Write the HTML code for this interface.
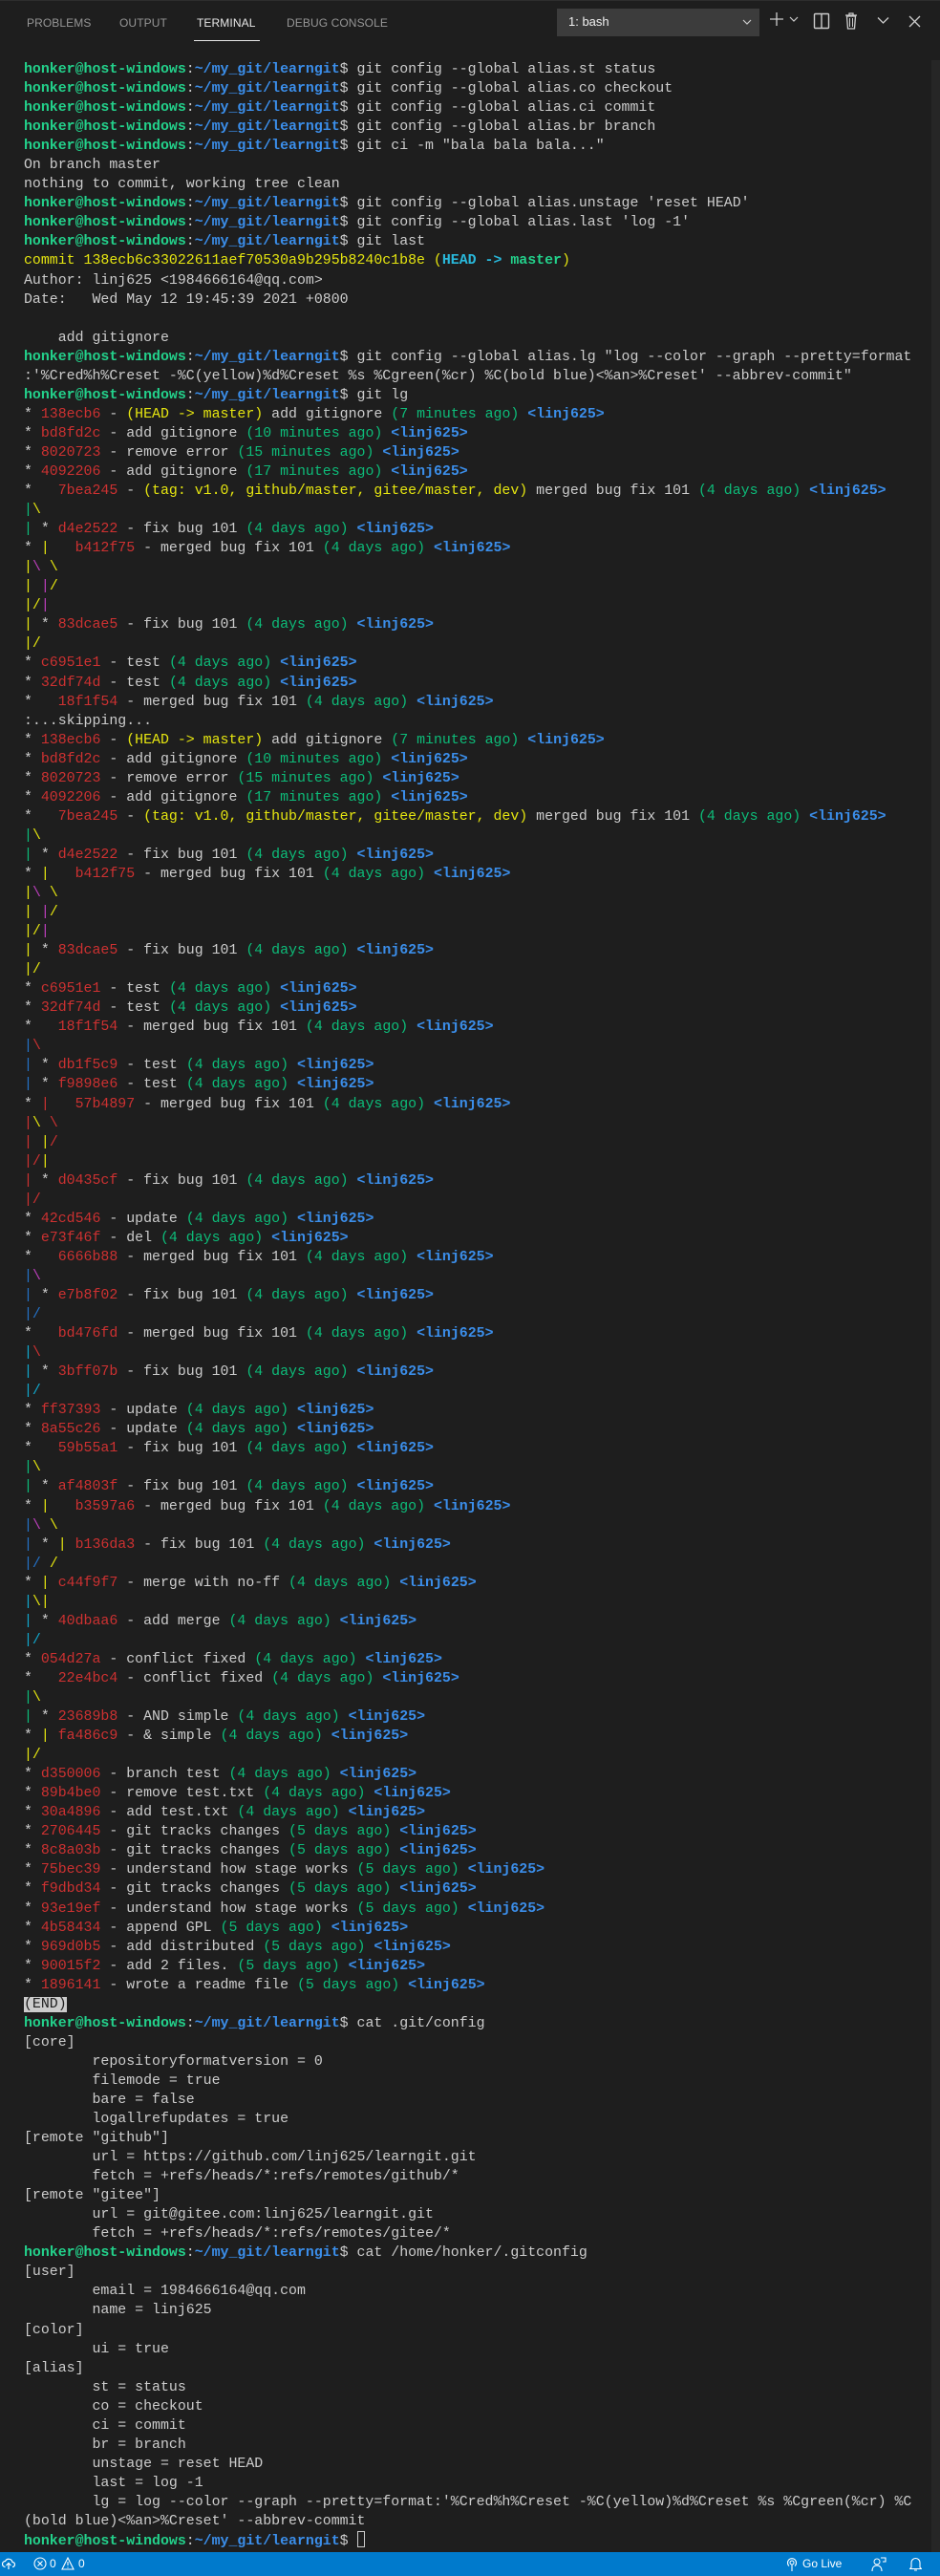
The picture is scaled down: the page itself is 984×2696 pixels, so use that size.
<!DOCTYPE html>
<html><head><meta charset="utf-8">
<style>
*{margin:0;padding:0;box-sizing:border-box}
html,body{width:984px;height:2696px;background:#1e1e1e;overflow:hidden;position:relative}
.tabs{position:absolute;left:0;top:0;width:984px;height:46px;font-family:"Liberation Sans",sans-serif;font-size:12px;color:#969696;border-top:1px solid #2d2d2d}
.tab{position:absolute;top:16px;letter-spacing:0.1px}
.tab.act{color:#e7e7e7}
.uline{position:absolute;left:203px;top:41px;width:69px;height:1px;background:#e7e7e7}
.dd{position:absolute;left:583px;top:8px;width:212px;height:29px;background:#3c3c3c;color:#f0f0f0;font-size:13px;padding:6px 0 0 12px}
.dd svg{position:absolute;right:8px;top:10px}
.ic{position:absolute;top:10px}
pre{position:absolute;left:25px;top:63px;font-family:"Liberation Mono",monospace;font-size:14.9px;line-height:20.05px;color:#cccccc;white-space:pre}
.g{color:#23d18b;font-weight:bold}.b{color:#3b8eea;font-weight:bold}
.r{color:#cd3131}.y{color:#e5e510}.t{color:#0dbc79}.a{color:#3b8eea;font-weight:bold}
.hc{color:#29b8db;font-weight:bold}.hm{color:#23d18b;font-weight:bold}
.R{color:#cd3131}.Y{color:#e5e510}.G{color:#0dbc79}.B{color:#2472c8}.M{color:#bc3fbc}.C{color:#11a8cd}
.end{background:#cccccc;color:#1e1e1e}
.cur{display:inline-block;width:8px;height:17px;border:1px solid #cccccc;vertical-align:-3px}
.sb{position:absolute;right:0;top:63px;width:9px;height:2608px;background:#262626}
.status{position:absolute;left:0;top:2671px;width:984px;height:25px;background:#007acc;color:#fff;font-family:"Liberation Sans",sans-serif;font-size:12px}
.status span{position:absolute;top:5px}
</style></head><body>
<div class="tabs">
<div class="tab" style="left:28px">PROBLEMS</div>
<div class="tab" style="left:125px">OUTPUT</div>
<div class="tab act" style="left:206px">TERMINAL</div>
<div class="tab" style="left:300px">DEBUG CONSOLE</div>
<div class="uline"></div>
<div class="dd">1: bash<svg width="10" height="8" viewBox="0 0 10 8"><path d="M1 2l4 4 4-4" stroke="#ccc" fill="none" stroke-width="1.2"/></svg></div>
<svg class="ic" style="left:804px" width="18" height="18" viewBox="0 0 18 18"><path d="M9 2v14M2 9h14" stroke="#ccc" stroke-width="1.3"/></svg>
<svg class="ic" style="left:826px;top:15px" width="10" height="8" viewBox="0 0 10 8"><path d="M1 2l4 4 4-4" stroke="#ccc" fill="none" stroke-width="1.2"/></svg>
<svg class="ic" style="left:851px;top:12px" width="18" height="18" viewBox="0 0 18 18"><rect x="1.5" y="1.5" width="15" height="15" rx="1" stroke="#ccc" fill="none" stroke-width="1.4"/><path d="M9 1.5v15" stroke="#ccc" stroke-width="1.4"/></svg>
<svg class="ic" style="left:884px;top:12px" width="14" height="18" viewBox="0 0 14 18"><path d="M1 3h12M5 3V1h4v2M2.5 4h9l-1 13h-7z" stroke="#ccc" fill="none" stroke-width="1.3"/><path d="M5.5 6v9M8.5 6v9" stroke="#ccc" stroke-width="1"/></svg>
<svg class="ic" style="left:918px;top:16px" width="13" height="9" viewBox="0 0 13 9"><path d="M1 1.5l5.5 5.5 5.5-5.5" stroke="#ccc" fill="none" stroke-width="1.3"/></svg>
<svg class="ic" style="left:951px;top:15px" width="13" height="13" viewBox="0 0 13 13"><path d="M1 1l11 11M12 1L1 12" stroke="#ccc" stroke-width="1.3"/></svg>
</div>
<div class="sb"></div>
<pre><span class="g">honker@host-windows</span>:<span class="b">~/my_git/learngit</span>$ git config --global alias.st status
<span class="g">honker@host-windows</span>:<span class="b">~/my_git/learngit</span>$ git config --global alias.co checkout
<span class="g">honker@host-windows</span>:<span class="b">~/my_git/learngit</span>$ git config --global alias.ci commit
<span class="g">honker@host-windows</span>:<span class="b">~/my_git/learngit</span>$ git config --global alias.br branch
<span class="g">honker@host-windows</span>:<span class="b">~/my_git/learngit</span>$ git ci -m "bala bala bala..."
On branch master
nothing to commit, working tree clean
<span class="g">honker@host-windows</span>:<span class="b">~/my_git/learngit</span>$ git config --global alias.unstage 'reset HEAD'
<span class="g">honker@host-windows</span>:<span class="b">~/my_git/learngit</span>$ git config --global alias.last 'log -1'
<span class="g">honker@host-windows</span>:<span class="b">~/my_git/learngit</span>$ git last
<span class="y">commit 138ecb6c33022611aef70530a9b295b8240c1b8e (<span class="hc">HEAD -&gt; </span><span class="hm">master</span>)</span>
Author: linj625 &lt;1984666164@qq.com&gt;
Date:   Wed May 12 19:45:39 2021 +0800

    add gitignore
<span class="g">honker@host-windows</span>:<span class="b">~/my_git/learngit</span>$ git config --global alias.lg "log --color --graph --pretty=format
:'%Cred%h%Creset -%C(yellow)%d%Creset %s %Cgreen(%cr) %C(bold blue)&lt;%an&gt;%Creset' --abbrev-commit"
<span class="g">honker@host-windows</span>:<span class="b">~/my_git/learngit</span>$ git lg
* <span class="r">138ecb6</span> - <span class="y">(HEAD -&gt; master)</span> add gitignore <span class="t">(7 minutes ago)</span> <span class="a">&lt;linj625&gt;</span>
* <span class="r">bd8fd2c</span> - add gitignore <span class="t">(10 minutes ago)</span> <span class="a">&lt;linj625&gt;</span>
* <span class="r">8020723</span> - remove error <span class="t">(15 minutes ago)</span> <span class="a">&lt;linj625&gt;</span>
* <span class="r">4092206</span> - add gitignore <span class="t">(17 minutes ago)</span> <span class="a">&lt;linj625&gt;</span>
*   <span class="r">7bea245</span> - <span class="y">(tag: v1.0, github/master, gitee/master, dev)</span> merged bug fix 101 <span class="t">(4 days ago)</span> <span class="a">&lt;linj625&gt;</span>
<span class="G">|</span><span class="Y">\</span>
<span class="G">|</span> * <span class="r">d4e2522</span> - fix bug 101 <span class="t">(4 days ago)</span> <span class="a">&lt;linj625&gt;</span>
* <span class="Y">|</span>   <span class="r">b412f75</span> - merged bug fix 101 <span class="t">(4 days ago)</span> <span class="a">&lt;linj625&gt;</span>
<span class="Y">|</span><span class="M">\</span> <span class="Y">\</span>
<span class="Y">|</span> <span class="M">|</span><span class="Y">/</span>
<span class="Y">|/</span><span class="M">|</span>
<span class="Y">|</span> * <span class="r">83dcae5</span> - fix bug 101 <span class="t">(4 days ago)</span> <span class="a">&lt;linj625&gt;</span>
<span class="Y">|/</span>
* <span class="r">c6951e1</span> - test <span class="t">(4 days ago)</span> <span class="a">&lt;linj625&gt;</span>
* <span class="r">32df74d</span> - test <span class="t">(4 days ago)</span> <span class="a">&lt;linj625&gt;</span>
*   <span class="r">18f1f54</span> - merged bug fix 101 <span class="t">(4 days ago)</span> <span class="a">&lt;linj625&gt;</span>
:...skipping...
* <span class="r">138ecb6</span> - <span class="y">(HEAD -&gt; master)</span> add gitignore <span class="t">(7 minutes ago)</span> <span class="a">&lt;linj625&gt;</span>
* <span class="r">bd8fd2c</span> - add gitignore <span class="t">(10 minutes ago)</span> <span class="a">&lt;linj625&gt;</span>
* <span class="r">8020723</span> - remove error <span class="t">(15 minutes ago)</span> <span class="a">&lt;linj625&gt;</span>
* <span class="r">4092206</span> - add gitignore <span class="t">(17 minutes ago)</span> <span class="a">&lt;linj625&gt;</span>
*   <span class="r">7bea245</span> - <span class="y">(tag: v1.0, github/master, gitee/master, dev)</span> merged bug fix 101 <span class="t">(4 days ago)</span> <span class="a">&lt;linj625&gt;</span>
<span class="G">|</span><span class="Y">\</span>
<span class="G">|</span> * <span class="r">d4e2522</span> - fix bug 101 <span class="t">(4 days ago)</span> <span class="a">&lt;linj625&gt;</span>
* <span class="Y">|</span>   <span class="r">b412f75</span> - merged bug fix 101 <span class="t">(4 days ago)</span> <span class="a">&lt;linj625&gt;</span>
<span class="Y">|</span><span class="M">\</span> <span class="Y">\</span>
<span class="Y">|</span> <span class="M">|</span><span class="Y">/</span>
<span class="Y">|/</span><span class="M">|</span>
<span class="Y">|</span> * <span class="r">83dcae5</span> - fix bug 101 <span class="t">(4 days ago)</span> <span class="a">&lt;linj625&gt;</span>
<span class="Y">|/</span>
* <span class="r">c6951e1</span> - test <span class="t">(4 days ago)</span> <span class="a">&lt;linj625&gt;</span>
* <span class="r">32df74d</span> - test <span class="t">(4 days ago)</span> <span class="a">&lt;linj625&gt;</span>
*   <span class="r">18f1f54</span> - merged bug fix 101 <span class="t">(4 days ago)</span> <span class="a">&lt;linj625&gt;</span>
<span class="B">|</span><span class="R">\</span>
<span class="B">|</span> * <span class="r">db1f5c9</span> - test <span class="t">(4 days ago)</span> <span class="a">&lt;linj625&gt;</span>
<span class="B">|</span> * <span class="r">f9898e6</span> - test <span class="t">(4 days ago)</span> <span class="a">&lt;linj625&gt;</span>
* <span class="R">|</span>   <span class="r">57b4897</span> - merged bug fix 101 <span class="t">(4 days ago)</span> <span class="a">&lt;linj625&gt;</span>
<span class="R">|</span><span class="Y">\</span> <span class="R">\</span>
<span class="R">|</span> <span class="Y">|</span><span class="R">/</span>
<span class="R">|/</span><span class="Y">|</span>
<span class="R">|</span> * <span class="r">d0435cf</span> - fix bug 101 <span class="t">(4 days ago)</span> <span class="a">&lt;linj625&gt;</span>
<span class="R">|/</span>
* <span class="r">42cd546</span> - update <span class="t">(4 days ago)</span> <span class="a">&lt;linj625&gt;</span>
* <span class="r">e73f46f</span> - del <span class="t">(4 days ago)</span> <span class="a">&lt;linj625&gt;</span>
*   <span class="r">6666b88</span> - merged bug fix 101 <span class="t">(4 days ago)</span> <span class="a">&lt;linj625&gt;</span>
<span class="B">|</span><span class="M">\</span>
<span class="B">|</span> * <span class="r">e7b8f02</span> - fix bug 101 <span class="t">(4 days ago)</span> <span class="a">&lt;linj625&gt;</span>
<span class="B">|/</span>
*   <span class="r">bd476fd</span> - merged bug fix 101 <span class="t">(4 days ago)</span> <span class="a">&lt;linj625&gt;</span>
<span class="C">|</span><span class="R">\</span>
<span class="C">|</span> * <span class="r">3bff07b</span> - fix bug 101 <span class="t">(4 days ago)</span> <span class="a">&lt;linj625&gt;</span>
<span class="C">|/</span>
* <span class="r">ff37393</span> - update <span class="t">(4 days ago)</span> <span class="a">&lt;linj625&gt;</span>
* <span class="r">8a55c26</span> - update <span class="t">(4 days ago)</span> <span class="a">&lt;linj625&gt;</span>
*   <span class="r">59b55a1</span> - fix bug 101 <span class="t">(4 days ago)</span> <span class="a">&lt;linj625&gt;</span>
<span class="G">|</span><span class="Y">\</span>
<span class="G">|</span> * <span class="r">af4803f</span> - fix bug 101 <span class="t">(4 days ago)</span> <span class="a">&lt;linj625&gt;</span>
* <span class="Y">|</span>   <span class="r">b3597a6</span> - merged bug fix 101 <span class="t">(4 days ago)</span> <span class="a">&lt;linj625&gt;</span>
<span class="B">|</span><span class="M">\</span> <span class="Y">\</span>
<span class="B">|</span> * <span class="Y">|</span> <span class="r">b136da3</span> - fix bug 101 <span class="t">(4 days ago)</span> <span class="a">&lt;linj625&gt;</span>
<span class="B">|/</span> <span class="Y">/</span>
* <span class="Y">|</span> <span class="r">c44f9f7</span> - merge with no-ff <span class="t">(4 days ago)</span> <span class="a">&lt;linj625&gt;</span>
<span class="C">|</span><span class="Y">\|</span>
<span class="C">|</span> * <span class="r">40dbaa6</span> - add merge <span class="t">(4 days ago)</span> <span class="a">&lt;linj625&gt;</span>
<span class="C">|/</span>
* <span class="r">054d27a</span> - conflict fixed <span class="t">(4 days ago)</span> <span class="a">&lt;linj625&gt;</span>
*   <span class="r">22e4bc4</span> - conflict fixed <span class="t">(4 days ago)</span> <span class="a">&lt;linj625&gt;</span>
<span class="G">|</span><span class="Y">\</span>
<span class="G">|</span> * <span class="r">23689b8</span> - AND simple <span class="t">(4 days ago)</span> <span class="a">&lt;linj625&gt;</span>
* <span class="Y">|</span> <span class="r">fa486c9</span> - &amp; simple <span class="t">(4 days ago)</span> <span class="a">&lt;linj625&gt;</span>
<span class="Y">|/</span>
* <span class="r">d350006</span> - branch test <span class="t">(4 days ago)</span> <span class="a">&lt;linj625&gt;</span>
* <span class="r">89b4be0</span> - remove test.txt <span class="t">(4 days ago)</span> <span class="a">&lt;linj625&gt;</span>
* <span class="r">30a4896</span> - add test.txt <span class="t">(4 days ago)</span> <span class="a">&lt;linj625&gt;</span>
* <span class="r">2706445</span> - git tracks changes <span class="t">(5 days ago)</span> <span class="a">&lt;linj625&gt;</span>
* <span class="r">8c8a03b</span> - git tracks changes <span class="t">(5 days ago)</span> <span class="a">&lt;linj625&gt;</span>
* <span class="r">75bec39</span> - understand how stage works <span class="t">(5 days ago)</span> <span class="a">&lt;linj625&gt;</span>
* <span class="r">f9dbd34</span> - git tracks changes <span class="t">(5 days ago)</span> <span class="a">&lt;linj625&gt;</span>
* <span class="r">93e19ef</span> - understand how stage works <span class="t">(5 days ago)</span> <span class="a">&lt;linj625&gt;</span>
* <span class="r">4b58434</span> - append GPL <span class="t">(5 days ago)</span> <span class="a">&lt;linj625&gt;</span>
* <span class="r">969d0b5</span> - add distributed <span class="t">(5 days ago)</span> <span class="a">&lt;linj625&gt;</span>
* <span class="r">90015f2</span> - add 2 files. <span class="t">(5 days ago)</span> <span class="a">&lt;linj625&gt;</span>
* <span class="r">1896141</span> - wrote a readme file <span class="t">(5 days ago)</span> <span class="a">&lt;linj625&gt;</span>
<span class="end">(END)</span>
<span class="g">honker@host-windows</span>:<span class="b">~/my_git/learngit</span>$ cat .git/config
[core]
        repositoryformatversion = 0
        filemode = true
        bare = false
        logallrefupdates = true
[remote "github"]
        url = https://github.com/linj625/learngit.git
        fetch = +refs/heads/*:refs/remotes/github/*
[remote "gitee"]
        url = git@gitee.com:linj625/learngit.git
        fetch = +refs/heads/*:refs/remotes/gitee/*
<span class="g">honker@host-windows</span>:<span class="b">~/my_git/learngit</span>$ cat /home/honker/.gitconfig
[user]
        email = 1984666164@qq.com
        name = linj625
[color]
        ui = true
[alias]
        st = status
        co = checkout
        ci = commit
        br = branch
        unstage = reset HEAD
        last = log -1
        lg = log --color --graph --pretty=format:'%Cred%h%Creset -%C(yellow)%d%Creset %s %Cgreen(%cr) %C
(bold blue)&lt;%an&gt;%Creset' --abbrev-commit
<span class="g">honker@host-windows</span>:<span class="b">~/my_git/learngit</span>$ <span class="cur"></span></pre>
<div class="status">
<svg style="position:absolute;left:2px;top:5px" width="14" height="14" viewBox="0 0 14 14"><path d="M3.5 10.5a3 3 0 0 1 0-6 4 4 0 0 1 7.5 1 2.5 2.5 0 0 1 0 5M7 13V7M4.5 9L7 6.5 9.5 9" stroke="#fff" fill="none" stroke-width="1.2"/></svg>
<svg style="position:absolute;left:35px;top:5px" width="14" height="14" viewBox="0 0 14 14"><circle cx="7" cy="7" r="6" stroke="#fff" fill="none" stroke-width="1.1"/><path d="M4.5 4.5l5 5M9.5 4.5l-5 5" stroke="#fff" stroke-width="1.1"/></svg>
<span style="left:52px">0</span>
<svg style="position:absolute;left:64px;top:5px" width="14" height="14" viewBox="0 0 14 14"><path d="M7 1L13 13H1z" stroke="#fff" fill="none" stroke-width="1.1"/><path d="M7 5v4M7 10.5v1" stroke="#fff" stroke-width="1.1"/></svg>
<span style="left:82px">0</span>
<svg style="position:absolute;left:823px;top:5px" width="12" height="15" viewBox="0 0 12 15"><circle cx="6" cy="6" r="2" stroke="#fff" fill="none"/><path d="M3 9.5a4.5 4.5 0 1 1 6 0M6 8v7" stroke="#fff" fill="none" stroke-width="1.1"/></svg>
<span style="left:840px">Go Live</span>
<svg style="position:absolute;left:912px;top:5px" width="16" height="15" viewBox="0 0 16 15"><circle cx="6" cy="5" r="3" stroke="#fff" fill="none"/><path d="M1 15c0-4 2-6 5-6s5 2 5 6M10 1h5v4h-3" stroke="#fff" fill="none" stroke-width="1.1"/></svg>
<svg style="position:absolute;left:952px;top:5px" width="13" height="15" viewBox="0 0 13 15"><path d="M2 11V6a4.5 4.5 0 0 1 9 0v5l1.5 1.5h-12zM5 14h3" stroke="#fff" fill="none" stroke-width="1.1"/></svg>
</div>
</body></html>
